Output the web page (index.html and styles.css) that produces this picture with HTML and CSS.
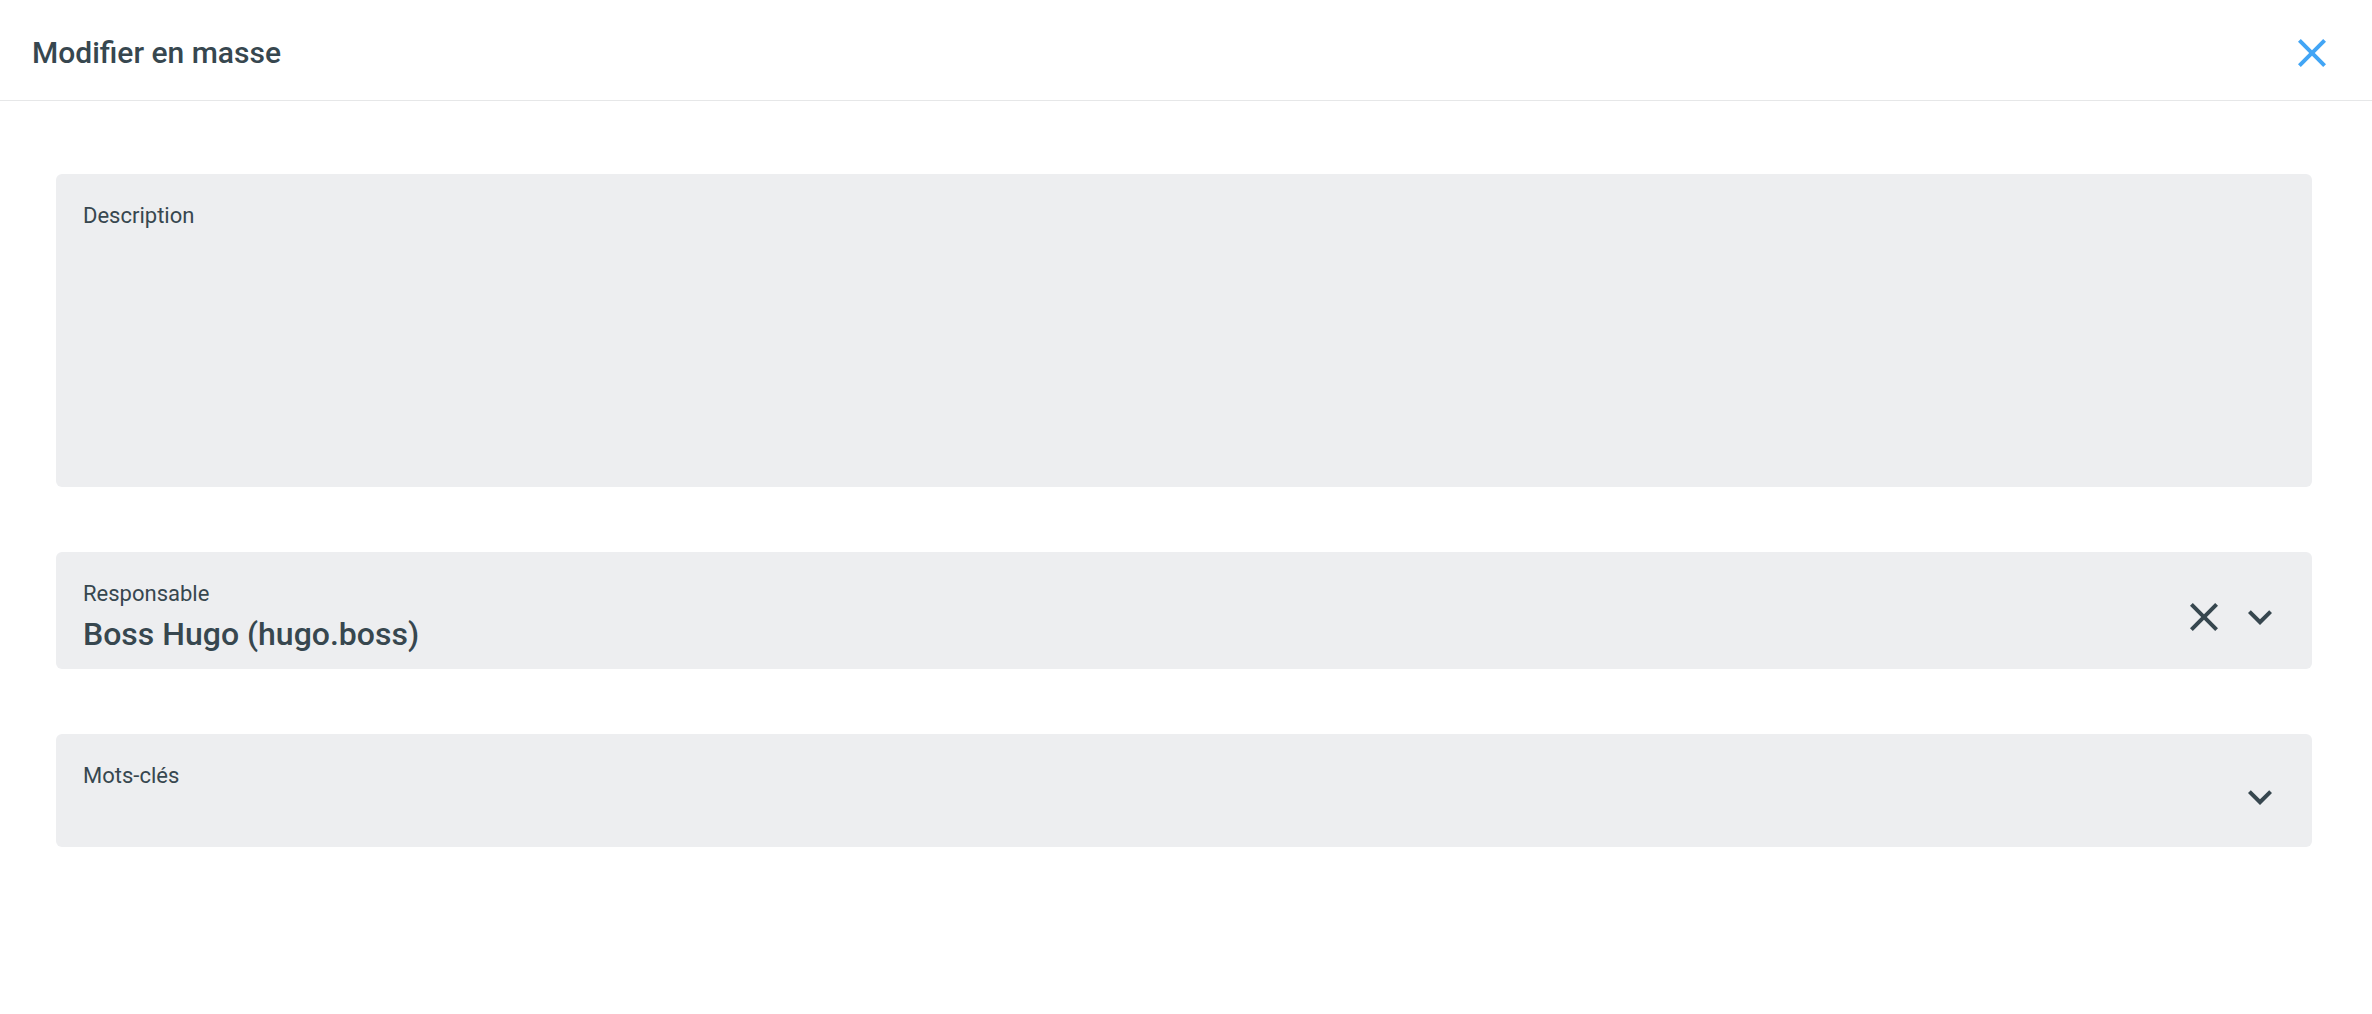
FILE: index.html
```html
<!DOCTYPE html>
<html lang="fr">
<head>
    <meta charset="UTF-8">
    <title>Modifier en masse</title>
    <link rel="stylesheet" href="styles.css">
</head>
<body>

    <div class="dialog">
        <!-- Header -->
        <div class="dialog-header">
            <h2 class="dialog-title">Modifier en masse</h2>
            <button class="icon-btn close-btn" type="button" aria-label="Fermer">
                <svg viewBox="0 0 24 24" width="48" height="48"><path d="M19 6.41L17.59 5 12 10.59 6.41 5 5 6.41 10.59 12 5 17.59 6.41 19 12 13.41 17.59 19 19 17.59 13.41 12z"/></svg>
            </button>
        </div>

        <!-- Fields -->
        <div class="dialog-body">
            <div class="field field-area">
                <label class="field-label" for="description">Description</label>
                <textarea id="description" class="field-textarea"></textarea>
            </div>

            <div class="field field-select">
                <div class="field-main">
                    <label class="field-label">Responsable</label>
                    <div class="field-value">Boss Hugo (hugo.boss)</div>
                </div>
                <div class="field-actions">
                    <button class="icon-btn" type="button" aria-label="Effacer">
                        <svg viewBox="0 0 24 24" width="48" height="48"><path d="M19 6.41L17.59 5 12 10.59 6.41 5 5 6.41 10.59 12 5 17.59 6.41 19 12 13.41 17.59 19 19 17.59 13.41 12z"/></svg>
                    </button>
                    <button class="icon-btn" type="button" aria-label="Ouvrir">
                        <svg viewBox="0 0 24 24" width="48" height="48"><path d="M16.59 8.59L12 13.17 7.41 8.59 6 10l6 6 6-6z"/></svg>
                    </button>
                </div>
            </div>

            <div class="field field-select">
                <div class="field-main">
                    <label class="field-label">Mots-clés</label>
                    <div class="field-value field-empty"></div>
                </div>
                <div class="field-actions">
                    <button class="icon-btn" type="button" aria-label="Ouvrir">
                        <svg viewBox="0 0 24 24" width="48" height="48"><path d="M16.59 8.59L12 13.17 7.41 8.59 6 10l6 6 6-6z"/></svg>
                    </button>
                </div>
            </div>
        </div>
    </div>

</body>
</html>
```

FILE: styles.css
```css
* {
    box-sizing: border-box;
}

body {
    margin: 0;
    font-family: Roboto, "Noto Sans", sans-serif;
    color: #37474f;
    background: #fff;
}

.dialog-header {
    height: 101px;
    padding: 5px 36px 0 32px;
    border-bottom: 1px solid #e6e7e8;
    display: flex;
    align-items: center;
    justify-content: space-between;
}

.dialog-title {
    margin: 0;
    font-size: 30px;
    font-weight: 500;
}

.icon-btn {
    border: none;
    background: transparent;
    padding: 0;
    margin: 0;
    width: 48px;
    height: 48px;
    display: flex;
    cursor: pointer;
    fill: #37474f;
}

.close-btn {
    fill: #42a5f5;
}

.dialog-body {
    padding: 73px 60px 0 56px;
    display: flex;
    flex-direction: column;
    gap: 65px;
}

.field {
    background: #edeef0;
    border-radius: 6px;
    padding: 29px 28px 16px 27px;
}

.field-label {
    display: block;
    font-size: 22px;
}

.field-area {
    height: 313px;
    display: flex;
    flex-direction: column;
}

.field-textarea {
    flex: 1;
    width: 100%;
    border: none;
    background: transparent;
    resize: none;
    outline: none;
    font-family: inherit;
    font-size: 30px;
    color: inherit;
}

.field-select {
    display: flex;
    align-items: center;
}

.field-main {
    flex: 1;
}

.field-value {
    margin-top: 9px;
    font-size: 32px;
    font-weight: 500;
}

.field-empty {
    height: 34px;
}

.field-actions {
    display: flex;
    gap: 8px;
}
```
